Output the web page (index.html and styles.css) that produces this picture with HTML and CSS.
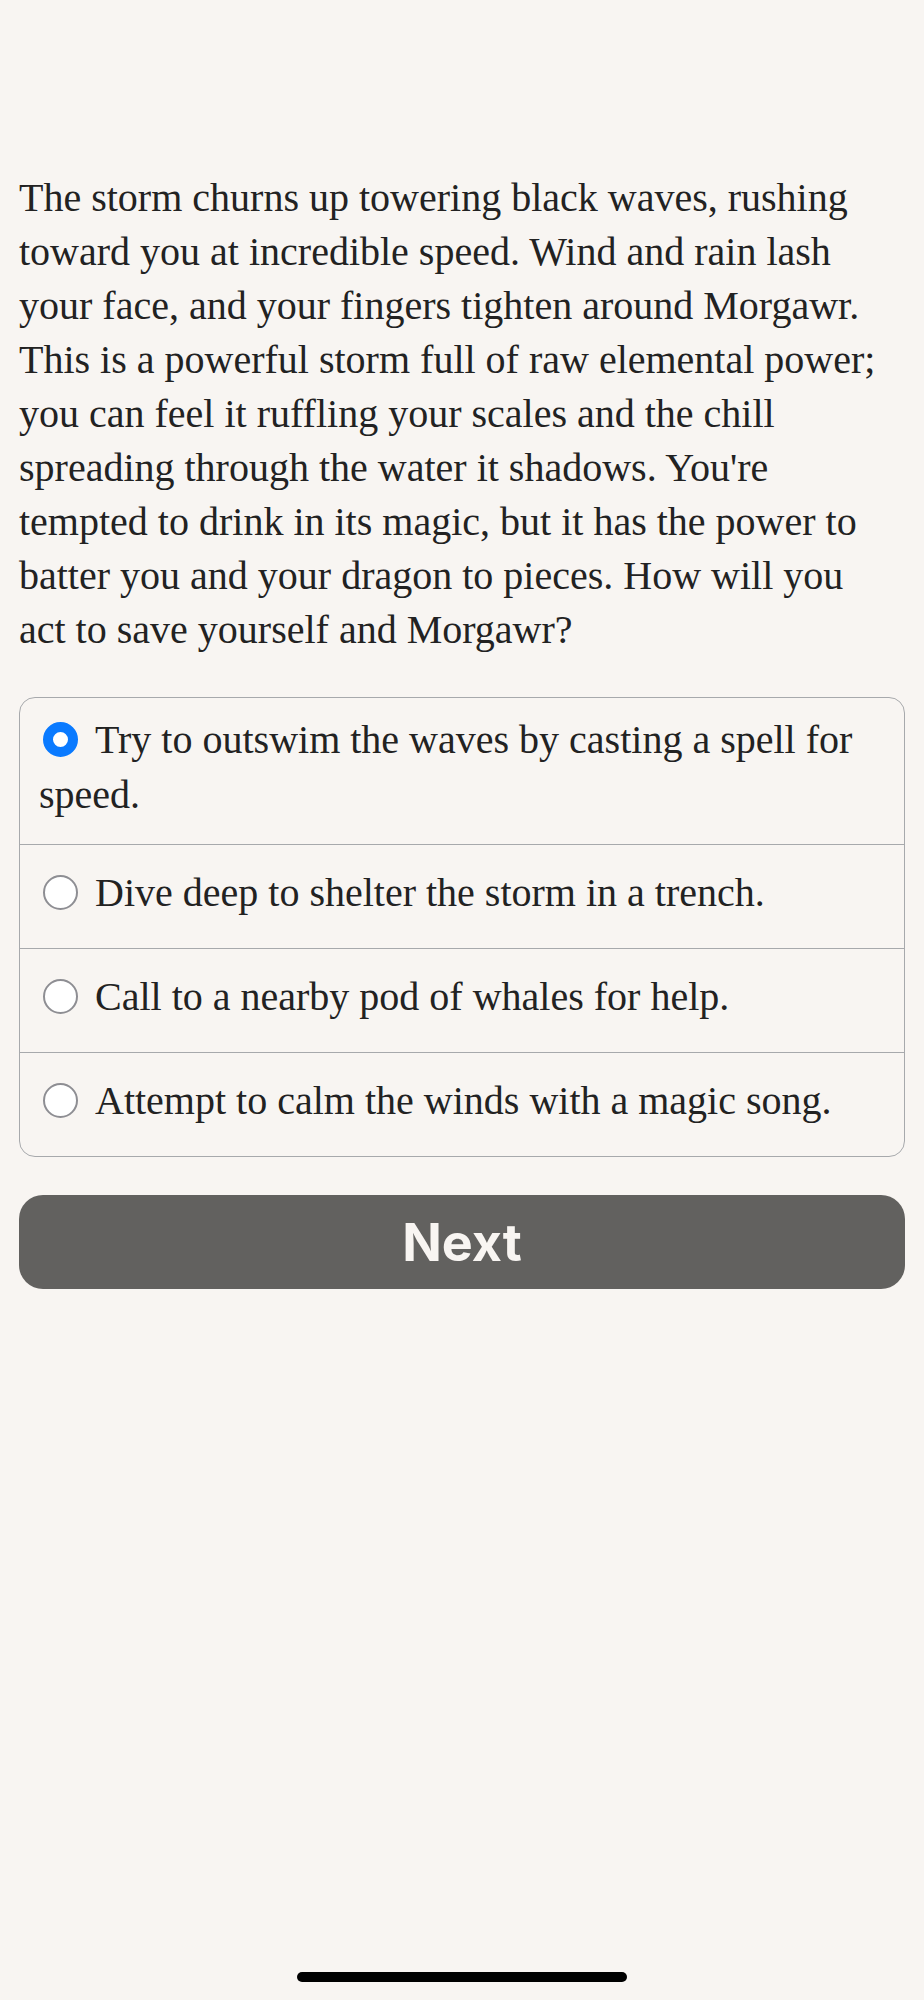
FILE: index.html
```html
<!DOCTYPE html>
<html lang="en">
<head>
  <meta charset="UTF-8" />
  <meta name="viewport" content="width=device-width, initial-scale=1.0" />
  <title>The Storm</title>
  <link rel="stylesheet" href="styles.css">
</head>
<body>

<main class="story">
  <p class="passage">The storm churns up towering black waves, rushing toward you at incredible speed. Wind and rain lash your face, and your fingers tighten around Morgawr. This is a powerful storm full of raw elemental power; you can feel it ruffling your scales and the chill spreading through the water it shadows. You're tempted to drink in its magic, but it has the power to batter you and your dragon to pieces. How will you act&nbsp;to save yourself and Morgawr?</p>

  <div class="choices">
    <label class="choice">
      <span class="choice-text"><span class="radio checked"></span>Try to outswim the waves by casting a spell for speed.</span>
    </label>
    <label class="choice">
      <span class="choice-text"><span class="radio"></span>Dive deep to shelter the storm in a trench.</span>
    </label>
    <label class="choice">
      <span class="choice-text"><span class="radio"></span>Call to a nearby pod of whales for help.</span>
    </label>
    <label class="choice">
      <span class="choice-text"><span class="radio"></span>Attempt to calm the winds with a magic song.</span>
    </label>
  </div>

  <button class="next-btn">Next</button>
</main>

<div class="home-indicator"></div>

</body>
</html>
```

FILE: styles.css
```css
body {
  margin: 0;
  padding: 0;
  background-color: #f8f5f2;
  color: #222;
  font-family: 'Liberation Serif', 'Times New Roman', serif;
}

.story {
  padding: 171px 19px 0;
}

.passage {
  margin: 0;
  font-size: 40px;
  line-height: 54px;
}

.choices {
  margin-top: 40px;
  border: 1px solid #a7a9ac;
  border-radius: 16px;
}

.choice {
  display: flex;
  align-items: center;
  box-sizing: border-box;
  min-height: 104px;
  padding: 14px 19px 22px;
  font-size: 40px;
  line-height: 55px;
  border-top: 1px solid #a7a9ac;
}

.choice:first-child {
  border-top: none;
}

.radio {
  display: inline-block;
  box-sizing: border-box;
  width: 35px;
  height: 35px;
  margin: 0 17px 0 4px;
  vertical-align: -4px;
  border: 2.5px solid #8e8e93;
  border-radius: 50%;
  background: #fff;
}

.radio.checked {
  border: 10px solid #0a7aff;
}

.next-btn {
  display: block;
  width: 100%;
  height: 94px;
  margin-top: 38px;
  border: none;
  border-radius: 24px;
  background-color: #62615f;
  color: #f8f5f2;
  font-family: Inter, 'Liberation Sans', sans-serif;
  font-weight: 700;
  font-size: 52px;
}

.home-indicator {
  position: fixed;
  left: 297px;
  bottom: 18px;
  width: 330px;
  height: 10px;
  border-radius: 5px;
  background: #000;
}
```
